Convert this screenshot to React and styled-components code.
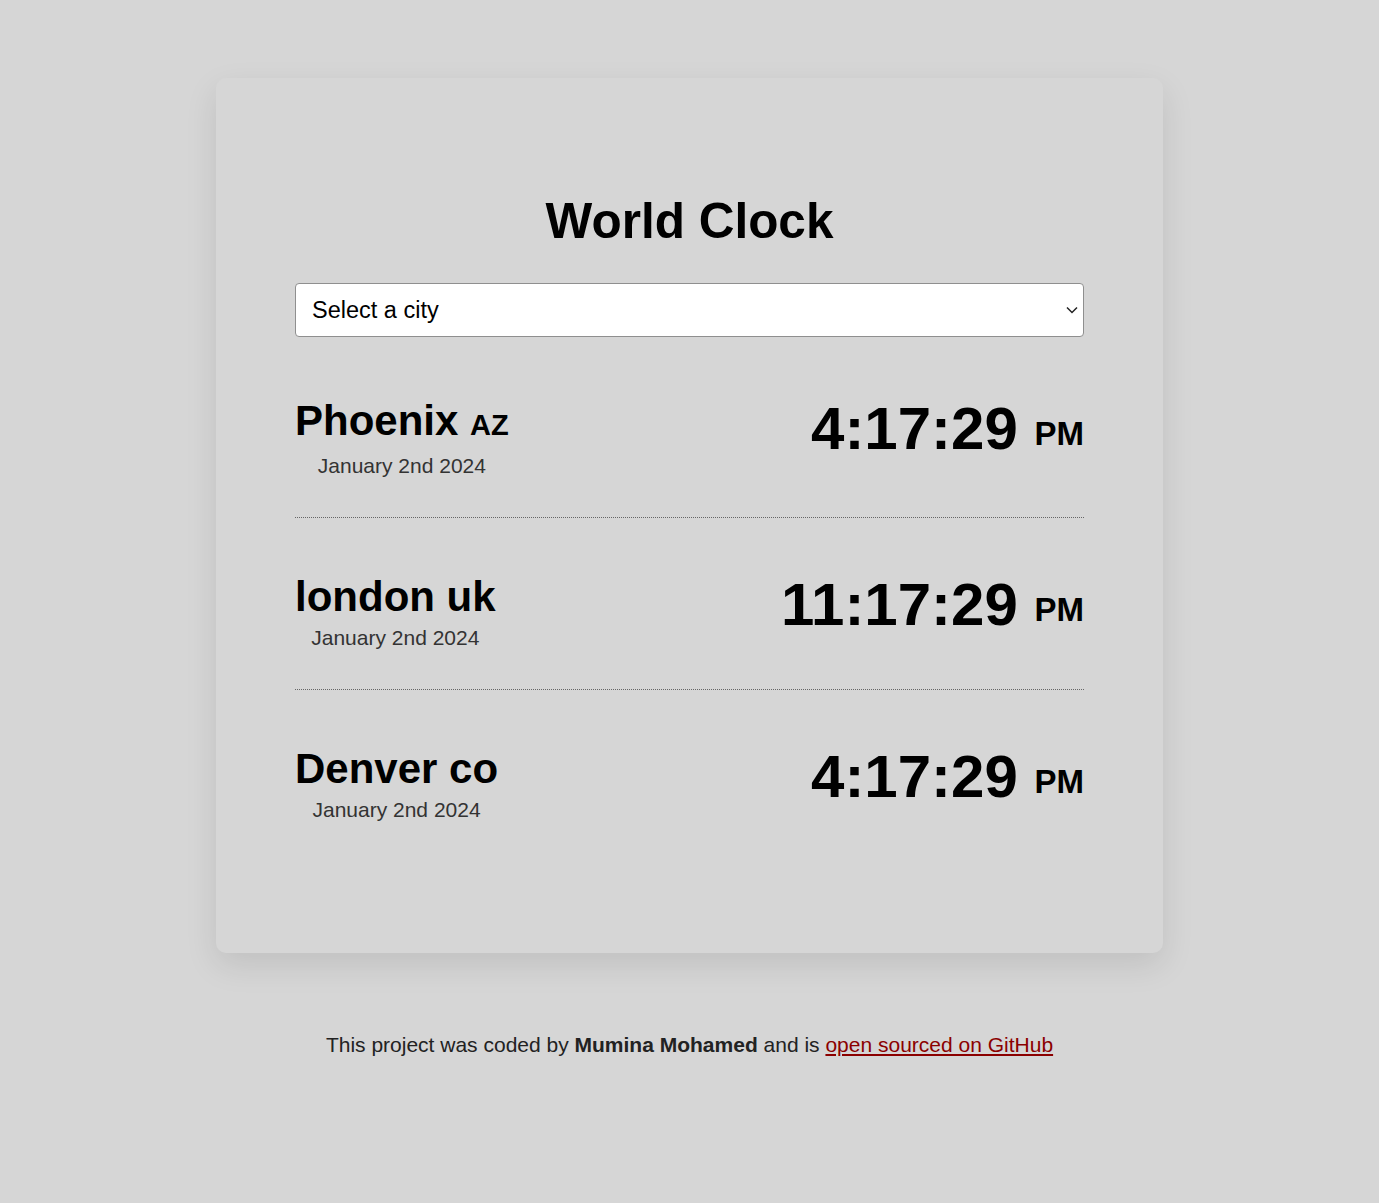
import { createGlobalStyle, styled } from "styled-components";

const GlobalStyle = createGlobalStyle`
  body {
    margin: 0;
    background: #d6d6d6;
    font-family: Arial, "Liberation Sans", sans-serif;
    color: #000;
  }
`;

const Page = styled.div`
  padding-top: 78px;
  padding-bottom: 120px;
`;

const Card = styled.div`
  box-sizing: border-box;
  width: 947px;
  margin: 0 auto;
  padding: 115px 79px 92px;
  background: #d6d6d6;
  border-radius: 10px;
  box-shadow: 0 12px 32px rgba(0, 0, 0, 0.1);
`;

const Title = styled.h1`
  margin: 0 0 34px;
  text-align: center;
  font-size: 49.5px;
  line-height: 56px;
  font-weight: 700;
`;

const SelectWrap = styled.div`
  position: relative;
  margin-bottom: 5px;
`;

const CitySelect = styled.select`
  display: block;
  box-sizing: border-box;
  width: 100%;
  height: 54px;
  padding: 0 30px 0 16px;
  font-family: Arial, "Liberation Sans", sans-serif;
  font-size: 23.5px;
  color: #000;
  background: #fff;
  border: 1px solid #8f8f8f;
  border-radius: 4px;
  appearance: none;
  -webkit-appearance: none;
`;

const Chevron = styled.svg`
  position: absolute;
  right: 6px;
  top: 50%;
  transform: translateY(-50%);
  pointer-events: none;
`;

const CityRow = styled.div`
  display: flex;
  justify-content: space-between;
  align-items: flex-start;
  padding: 55px 0 39px;
  border-bottom: ${(props) => (props.$last ? "none" : "1px dotted #666")};
`;

const CityInfo = styled.div`
  text-align: center;
`;

const CityName = styled.h2`
  margin: 0;
  font-size: 42px;
  line-height: 48px;
  font-weight: 700;
`;

const State = styled.span`
  font-size: 29px;
  font-weight: 900;
`;

const CityDate = styled.div`
  margin-top: 5px;
  font-size: 21px;
  line-height: 24px;
  color: #333;
`;

const Time = styled.div`
  font-size: 60px;
  line-height: 63px;
  font-weight: 700;
`;

const Meridiem = styled.span`
  font-size: 33px;
  vertical-align: 4px;
`;

const Footer = styled.footer`
  margin-top: 80px;
  text-align: center;
  font-size: 21px;
  line-height: 24px;
  color: #222;
`;

const Author = styled.strong`
  font-weight: 700;
`;

const Link = styled.a`
  color: #8b0000;
`;

const cities = [
  { name: "Phoenix", state: "AZ", time: "4:17:29" },
  { name: "london uk", time: "11:17:29" },
  { name: "Denver co", time: "4:17:29" },
];

export default function App() {
  return (
    <Page>
      <GlobalStyle />
      <Card>
        <Title>World Clock</Title>
        <SelectWrap>
          <CitySelect defaultValue="">
            <option value="">Select a city</option>
            <option value="tokyo">Tokyo</option>
            <option value="paris">Paris</option>
          </CitySelect>
          <Chevron width="12" height="8" viewBox="0 0 12 8" fill="none">
            <path d="M1 1.5 L6 6.5 L11 1.5" stroke="#222" strokeWidth="1.5" />
          </Chevron>
        </SelectWrap>
        {cities.map((c, i) => (
          <CityRow key={c.name} $last={i === cities.length - 1}>
            <CityInfo>
              <CityName>
                {c.name}
                {c.state && (
                  <>
                    {" "}
                    <State>{c.state}</State>
                  </>
                )}
              </CityName>
              <CityDate>January 2nd 2024</CityDate>
            </CityInfo>
            <Time>
              {c.time} <Meridiem>PM</Meridiem>
            </Time>
          </CityRow>
        ))}
      </Card>
      <Footer>
        This project was coded by <Author>Mumina Mohamed</Author> and is{" "}
        <Link href="#">open sourced on GitHub</Link>
      </Footer>
    </Page>
  );
}
